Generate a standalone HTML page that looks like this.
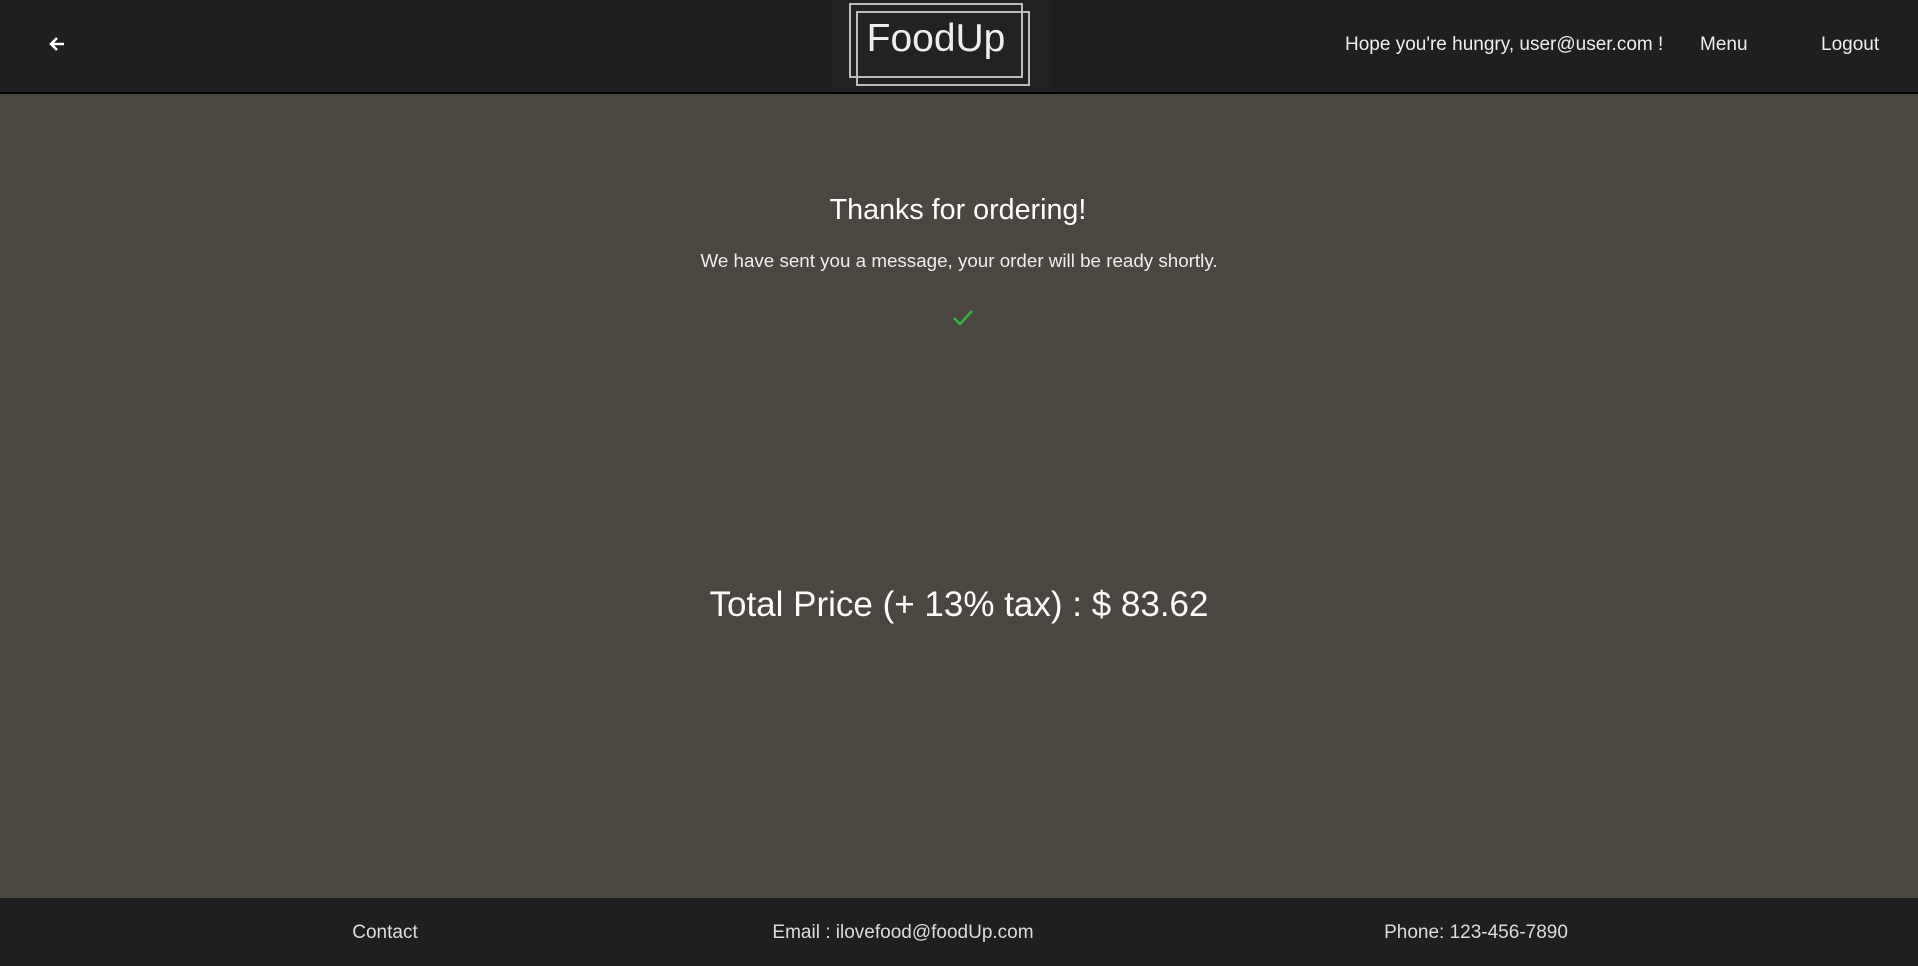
<!DOCTYPE html>
<html><head><meta charset="utf-8"><style>
body{margin:0;width:1918px;height:966px;background:#4b4740;font-family:"Liberation Sans",sans-serif;color:#fff;position:relative;overflow:hidden}
.hdr{position:absolute;left:0;top:0;width:1918px;height:92px;background:#1f1f1f;border-bottom:2px solid #000}
.logo{position:absolute;left:833px;top:0;width:219px;height:92px;background:#222}
.b1{position:absolute;left:849px;top:3px;width:170px;height:71px;border:2px solid #bbb}
.b2{position:absolute;left:856px;top:11px;width:170px;height:71px;border:2px solid #bbb}
.lt{position:absolute;left:849px;top:17px;width:174px;text-align:center;font-size:39px;color:#eee}
.n{position:absolute;top:34px;font-size:19px;color:#eee}
.c{position:absolute;left:0;width:1918px;text-align:center}
.ft{position:absolute;left:0;top:898px;width:1918px;height:68px;background:#1f1f1f}
.f{position:absolute;top:922px;font-size:19px;color:#ddd;transform:translateX(-50%)}
</style></head><body>
<div class="hdr"></div>
<svg style="position:absolute;left:48px;top:35px" width="18" height="18" viewBox="0 0 18 18"><path d="M16 9H3M9 3L3 9l6 6" stroke="#fff" stroke-width="2.6" fill="none"/></svg>
<div class="logo"></div><div class="b1"></div><div class="b2"></div><div class="lt">FoodUp</div>
<div class="n" style="left:1345px">Hope you're hungry, user@user.com !</div>
<div class="n" style="left:1700px">Menu</div>
<div class="n" style="left:1821px">Logout</div>
<div class="c" style="top:194px;font-size:28.7px;left:-1px">Thanks for ordering!</div>
<div class="c" style="top:250px;font-size:18.8px;color:#eee">We have sent you a message, your order will be ready shortly.</div>
<svg style="position:absolute;left:952px;top:308px" width="22" height="20" viewBox="0 0 22 20"><path d="M2 10l6 6L20 3" stroke="#2db83d" stroke-width="2.5" fill="none"/></svg>
<div class="c" style="top:585px;font-size:35px">Total Price (+ 13% tax) : $ 83.62</div>
<div class="ft"></div>
<div class="f" style="left:385px">Contact</div>
<div class="f" style="left:903px">Email : ilovefood@foodUp.com</div>
<div class="f" style="left:1476px">Phone: 123-456-7890</div>
</body></html>
